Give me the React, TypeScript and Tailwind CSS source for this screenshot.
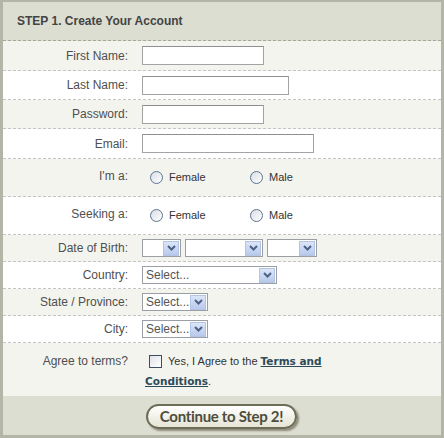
import React from "react";

const font = { fontFamily: '"Liberation Sans", Arial, sans-serif' };

const Arrow = () => (
  <span className="flex h-[15px] w-[16px] items-center justify-center border border-[#b4c4e4] bg-gradient-to-b from-[#dce6f8] to-[#b8c9ec]">
    <svg width="9" height="6" viewBox="0 0 9 6">
      <path d="M1 1 L4.5 4.5 L8 1" fill="none" stroke="#4d6185" strokeWidth="2" />
    </svg>
  </span>
);

const Select = ({ w, text }: { w: string; text?: string }) => (
  <div className={`flex h-[18px] items-center justify-between border border-[#9a9fa6] bg-white pl-[3px] pr-px ${w}`}>
    <span className="text-[12px] leading-none text-[#555]">{text}</span>
    <Arrow />
  </div>
);

const Input = ({ w }: { w: string }) => (
  <div className={`h-[19px] border border-[#a3a3a3] border-t-[#8f8f8f] bg-white ${w}`} />
);

const Radio = ({ label }: { label: string }) => (
  <div className="flex items-center">
    <span className="h-[13px] w-[13px] rounded-full border border-[#5b7394] bg-gradient-to-br from-[#d9dde3] to-white" />
    <span className="ml-[6px] text-[11px] text-[#333]">{label}</span>
  </div>
);

const Row = ({
  label,
  light,
  h,
  children,
  top,
}: {
  label: string;
  light?: boolean;
  h: string;
  children: React.ReactNode;
  top?: string;
}) => (
  <div
    className={`flex border-b border-dashed border-[#c4c4c4] ${h} ${light ? "bg-[#f4f4ef]" : "bg-white"} ${top ? "items-start " + top : "items-center"}`}
  >
    <div className="w-[125px] text-right text-[12px] text-[#4f4f4f]">{label}</div>
    <div className="ml-[14px]">{children}</div>
  </div>
);

const linkCls = "text-[10.5px] font-bold text-[#2d4b58] underline";
const linkFont = { fontFamily: '"DejaVu Sans", Verdana, sans-serif' };

export default function App() {
  return (
    <div
      className="h-[438px] w-[444px] border-x-[3px] border-t-[2px] border-b-[3px] border-[#b3b6a6] bg-[#dcded2]"
      style={font}
    >
      <div className="flex h-[39px] items-center border-b border-dashed border-[#a6a897] pl-[14px]">
        <h1 className="text-[12px] font-bold text-[#444]">STEP 1. Create Your Account</h1>
      </div>

      <Row label="First Name:" light h="h-[30px]">
        <Input w="w-[122px]" />
      </Row>
      <Row label="Last Name:" h="h-[29px]">
        <Input w="w-[147px]" />
      </Row>
      <Row label="Password:" light h="h-[29px]">
        <Input w="w-[122px]" />
      </Row>
      <Row label="Email:" h="h-[30px]">
        <Input w="w-[172px]" />
      </Row>
      <Row label="I'm a:" light h="h-[38px]" top="pt-[8px]">
        <div className="flex pl-[8px] pt-[2px]">
          <div className="w-[100px]">
            <Radio label="Female" />
          </div>
          <Radio label="Male" />
        </div>
      </Row>
      <Row label="Seeking a:" h="h-[38px]" top="pt-[8px]">
        <div className="flex pl-[8px] pt-[2px]">
          <div className="w-[100px]">
            <Radio label="Female" />
          </div>
          <Radio label="Male" />
        </div>
      </Row>
      <Row label="Date of Birth:" light h="h-[27px]">
        <div className="flex gap-[4px]">
          <Select w="w-[39px]" />
          <Select w="w-[78px]" />
          <Select w="w-[50px]" />
        </div>
      </Row>
      <Row label="Country:" h="h-[27px]">
        <Select w="w-[135px]" text="Select..." />
      </Row>
      <Row label="State / Province:" light h="h-[27px]">
        <Select w="w-[66px]" text="Select..." />
      </Row>
      <Row label="City:" h="h-[27px]">
        <Select w="w-[66px]" text="Select..." />
      </Row>

      <div className="flex h-[54px] items-start border-b border-[#dcded2] bg-[#f4f4ef] pt-[8px]">
        <div className="w-[125px] pt-[1px] text-right text-[12px] text-[#4f4f4f]">Agree to terms?</div>
        <div className="ml-[17px] flex flex-col text-[11px] leading-[20px] text-[#333]">
          <div className="flex items-center">
            <span className="ml-[4px] mr-[6px] h-[13px] w-[13px] border border-[#3e4d60] bg-gradient-to-br from-[#dfe2e6] to-white" />
            <span>Yes, I Agree to the&nbsp;</span>
            <a href="#" className={linkCls} style={linkFont}>
              Terms and
            </a>
          </div>
          <div>
            <a href="#" className={linkCls} style={linkFont}>
              Conditions
            </a>
            <span>.</span>
          </div>
        </div>
      </div>

      <div className="flex h-[38px] items-center pl-[143px]">
        <button
          className="flex h-[25px] w-[151px] items-center justify-center rounded-full border-2 border-[#6d6c57] bg-gradient-to-b from-white to-[#e6e4d4] text-[15px] font-bold tracking-[-0.3px] text-[#4d4d3c] shadow-[2px_2px_2px_#8d8c7c]"
          style={{ fontFamily: 'Lato, "Open Sans", sans-serif' }}
        >
          Continue to Step 2!
        </button>
      </div>
    </div>
  );
}
